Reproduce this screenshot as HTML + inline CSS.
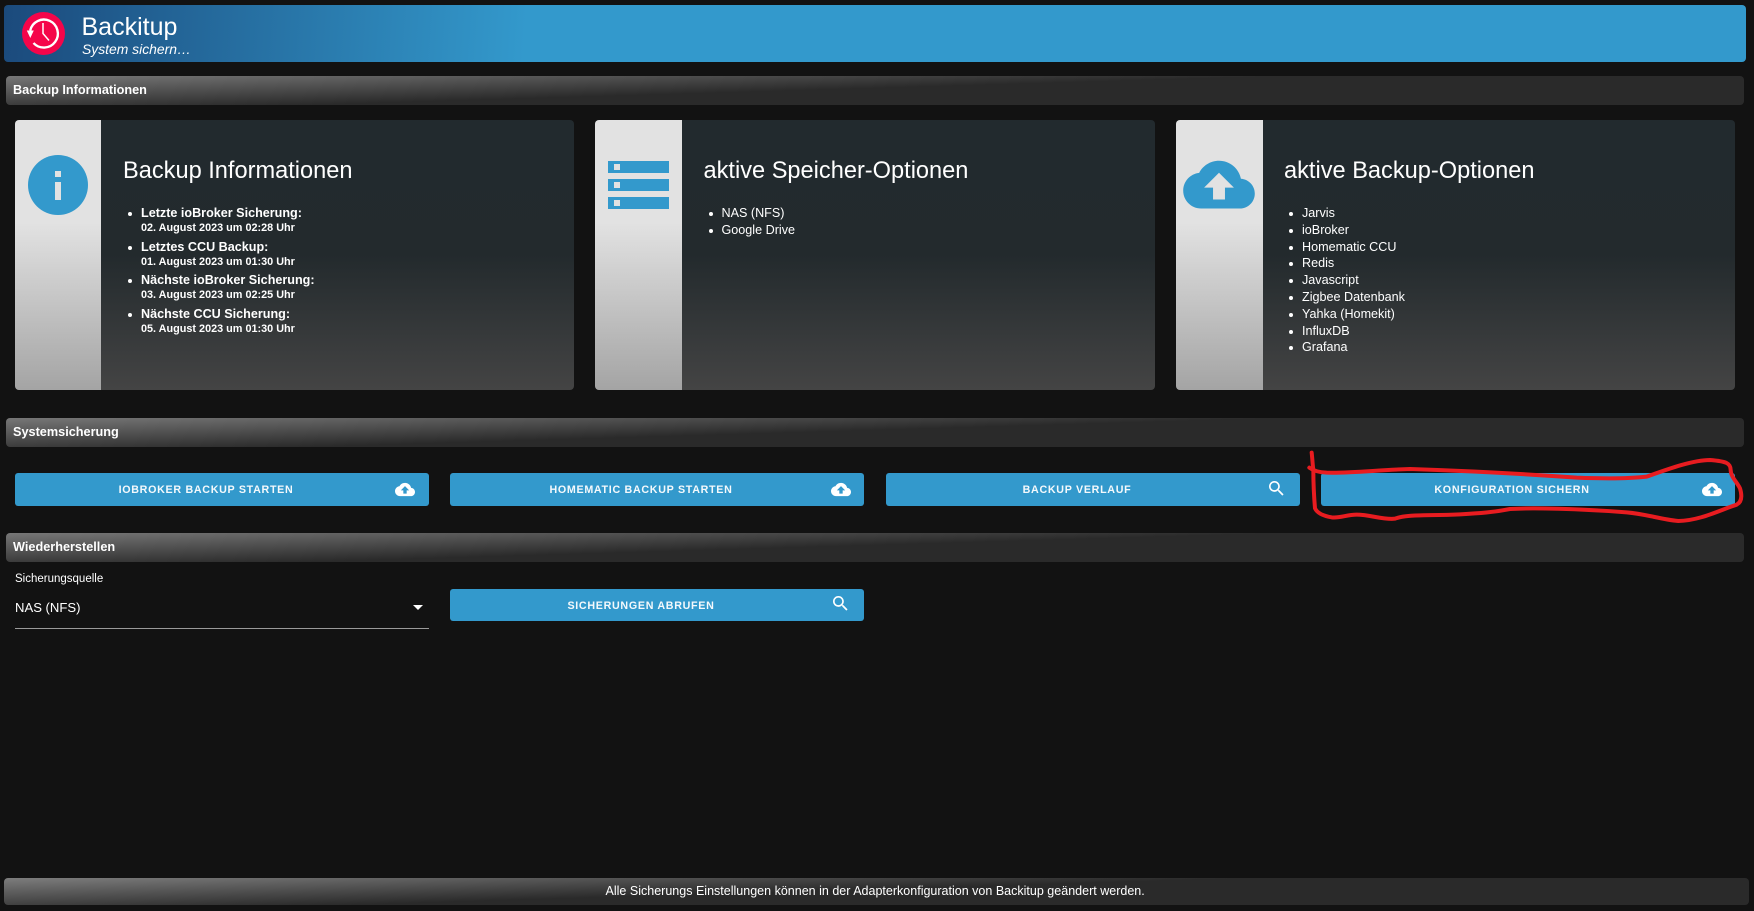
<!DOCTYPE html>
<html lang="de">
<head>
<meta charset="utf-8">
<title>Backitup</title>
<style>
html,body{margin:0;padding:0;background:#121212;width:1754px;height:911px;overflow:hidden}
body{position:relative;font-family:"Liberation Sans",sans-serif;color:#fff}
.a{position:absolute}
.t{position:absolute;white-space:nowrap}
.hdr{left:4px;top:5px;width:1742px;height:57px;border-radius:4px;background:linear-gradient(94deg,#1b4a7c 0,#3399cc 30%)}
.bar{position:absolute;left:6px;width:1738px;height:29px;border-radius:4px;background:linear-gradient(178.3deg,#777 0,#2a2a2a 47%)}
.bar b{position:absolute;left:7px;top:7px;font-size:12.7px;line-height:15px;white-space:nowrap}
.card{position:absolute;top:120px;height:270px;border-radius:4px;overflow:hidden;background:linear-gradient(180deg,#222a2e 0,#232a2d 50%,#444 100%)}
.strip{position:absolute;left:0;top:0;bottom:0;width:87px;background:linear-gradient(180deg,#e2e2e2 0,#e2e2e2 38%,#a4a4a4 100%)}
.card h2{position:absolute;margin:0;top:36px;font-weight:400;font-size:23.6px;line-height:30px;white-space:nowrap}
ul{position:absolute;margin:0;padding:0;list-style:none}
li{position:relative;white-space:nowrap}
li:before{content:"";position:absolute;left:-13px;width:4px;height:4px;border-radius:50%;background:#fff}
.l1 li{height:33.6px;font-size:12.6px;line-height:15px}
.l1 li:before{top:6px}
.l1 b{display:block}
.l1 small{display:block;font-weight:700;font-size:10.85px;line-height:15px}
.l2 li{height:16.8px;line-height:16.8px;font-size:12.6px}
.l2 li:before{top:7px}
.btn{position:absolute;width:414px;height:33px;top:473px;background:#3399cc;border-radius:3px}
.btn span{position:absolute;left:0;width:382px;text-align:center;top:1px;line-height:33px;font-size:10.7px;font-weight:700;letter-spacing:.7px;white-space:nowrap;color:#f4f9fc}
.btn svg{position:absolute}
</style>
</head>
<body>
<div class="a hdr"></div>
<svg class="a" style="left:22px;top:12px" width="43" height="43" viewBox="0 0 43 43">
<circle cx="21.500" cy="21.500" r="21.500" fill="#f5054a"/>
<path d="M8.200 18.500A14 14 0 1 1 11.500 31" fill="none" stroke="#fff" stroke-width="2.400"/>
<path d="M4.800 18.500h7l-3.500 7.500z" fill="#fff"/>
<path d="M21 11v10.500l6 7" fill="none" stroke="#fff" stroke-width="1.500"/>
</svg>
<div class="t" style="left:81.500px;top:12px;font-size:25px;line-height:30px">Backitup</div>
<div class="t" style="left:82px;top:41.400px;font-size:13.900px;line-height:16px;font-style:italic">System sichern…</div>

<div class="bar" style="top:76px"><b>Backup Informationen</b></div>

<div class="card" style="left:15px;width:559px">
<div class="strip" style="width:86px"></div>
<svg class="a" style="left:13px;top:35px" width="60" height="60" viewBox="0 0 60 60"><circle cx="30" cy="30" r="30" fill="#3399cc"/><rect x="27" y="16" width="6" height="6" fill="#e2e2e2"/><rect x="27" y="27" width="6" height="18" fill="#e2e2e2"/></svg>
<h2 style="left:108px">Backup Informationen</h2>
<ul class="l1" style="left:126px;top:86px">
<li><b>Letzte ioBroker Sicherung:</b><small>02. August 2023 um 02:28 Uhr</small></li>
<li><b>Letztes CCU Backup:</b><small>01. August 2023 um 01:30 Uhr</small></li>
<li><b>Nächste ioBroker Sicherung:</b><small>03. August 2023 um 02:25 Uhr</small></li>
<li><b>Nächste CCU Sicherung:</b><small>05. August 2023 um 01:30 Uhr</small></li>
</ul>
</div>

<div class="card" style="left:595px;width:560px">
<div class="strip"></div>
<svg class="a" style="left:13px;top:41px" width="61" height="48" viewBox="0 0 61 48"><g fill="#3399cc"><rect width="61" height="12"/><rect y="18" width="61" height="12"/><rect y="36" width="61" height="12"/></g><g fill="#e2e2e2"><rect x="6" y="3" width="6" height="6"/><rect x="6" y="21" width="6" height="6"/><rect x="6" y="39" width="6" height="6"/></g></svg>
<h2 style="left:108.500px">aktive Speicher-Optionen</h2>
<ul class="l2" style="left:126.500px;top:85px">
<li>NAS (NFS)</li>
<li>Google Drive</li>
</ul>
</div>

<div class="card" style="left:1176px;width:559px">
<div class="strip"></div>
<svg class="a" style="left:6.500px;top:38.500px" width="72" height="51" viewBox="0 3.400 24 17.100"><path fill="#3399cc" fill-rule="evenodd" d="M19.350 10.040C18.670 6.590 15.640 4 12 4 9.110 4 6.600 5.640 5.350 8.040 2.340 8.360 0 10.910 0 14c0 3.310 2.690 6 6 6h13c2.760 0 5-2.240 5-5 0-2.640-2.050-4.780-4.650-4.960zM14 13v4h-4v-4H7l5-5 5 5h-3z"/></svg>
<h2 style="left:108px">aktive Backup-Optionen</h2>
<ul class="l2" style="left:126px;top:85px">
<li>Jarvis</li>
<li>ioBroker</li>
<li>Homematic CCU</li>
<li>Redis</li>
<li>Javascript</li>
<li>Zigbee Datenbank</li>
<li>Yahka (Homekit)</li>
<li>InfluxDB</li>
<li>Grafana</li>
</ul>
</div>

<div class="bar" style="top:418px"><b>Systemsicherung</b></div>

<div class="btn" style="left:15px"><span>IOBROKER BACKUP STARTEN</span><svg style="left:380px;top:8.500px" width="20" height="15" viewBox="0 3.500 24 17"><path fill="#fff" fill-rule="evenodd" d="M19.350 10.040C18.670 6.590 15.640 4 12 4 9.110 4 6.600 5.640 5.350 8.040 2.340 8.360 0 10.910 0 14c0 3.310 2.690 6 6 6h13c2.760 0 5-2.240 5-5 0-2.640-2.050-4.780-4.650-4.960zM14 13v4h-4v-4H7l5-5 5 5h-3z"/></svg></div>
<div class="btn" style="left:450px"><span>HOMEMATIC BACKUP STARTEN</span><svg style="left:381px;top:8.500px" width="20" height="15" viewBox="0 3.500 24 17"><path fill="#fff" fill-rule="evenodd" d="M19.350 10.040C18.670 6.590 15.640 4 12 4 9.110 4 6.600 5.640 5.350 8.040 2.340 8.360 0 10.910 0 14c0 3.310 2.690 6 6 6h13c2.760 0 5-2.240 5-5 0-2.640-2.050-4.780-4.650-4.960zM14 13v4h-4v-4H7l5-5 5 5h-3z"/></svg></div>
<div class="btn" style="left:886px"><span>BACKUP VERLAUF</span><svg style="left:383px;top:8px" width="15" height="15" viewBox="3 3 18 18"><path fill="#fff" d="M15.500 14h-.790l-.280-.270C15.410 12.590 16 11.110 16 9.500 16 5.910 13.090 3 9.500 3S3 5.910 3 9.500 5.910 16 9.500 16c1.610 0 3.090-.590 4.230-1.570l.270.280v.790l5 4.990L20.490 19l-4.990-5zm-6 0C7.010 14 5 11.990 5 9.500S7.010 5 9.500 5 14 7.010 14 9.500 11.990 14 9.500 14z"/></svg></div>
<div class="btn" style="left:1321px"><span>KONFIGURATION SICHERN</span><svg style="left:381px;top:8.500px" width="20" height="15" viewBox="0 3.500 24 17"><path fill="#fff" fill-rule="evenodd" d="M19.350 10.040C18.670 6.590 15.640 4 12 4 9.110 4 6.600 5.640 5.350 8.040 2.340 8.360 0 10.910 0 14c0 3.310 2.690 6 6 6h13c2.760 0 5-2.240 5-5 0-2.640-2.050-4.780-4.650-4.960zM14 13v4h-4v-4H7l5-5 5 5h-3z"/></svg></div>

<div class="bar" style="top:533px"><b>Wiederherstellen</b></div>

<div class="t" style="left:15px;top:572px;font-size:11.500px;line-height:14px">Sicherungsquelle</div>
<div class="t" style="left:15px;top:599px;font-size:13.100px;line-height:17px">NAS (NFS)</div>
<div class="a" style="left:413px;top:605px;width:0;height:0;border-left:5px solid transparent;border-right:5px solid transparent;border-top:5px solid #fff"></div>
<div class="a" style="left:15px;top:628px;width:414px;height:1px;background:#9a9a9a"></div>

<div class="btn" style="left:450px;top:589px;height:32px"><span style="line-height:32px">SICHERUNGEN ABRUFEN</span><svg style="left:383px;top:7px" width="15" height="15" viewBox="3 3 18 18"><path fill="#fff" d="M15.500 14h-.790l-.280-.270C15.410 12.590 16 11.110 16 9.500 16 5.910 13.090 3 9.500 3S3 5.910 3 9.500 5.910 16 9.500 16c1.610 0 3.090-.590 4.230-1.570l.270.280v.790l5 4.990L20.490 19l-4.990-5zm-6 0C7.010 14 5 11.990 5 9.500S7.010 5 9.500 5 14 7.010 14 9.500 11.990 14 9.500 14z"/></svg></div>

<div class="a" style="left:4px;top:878px;width:1745px;height:27px;border-radius:4px;background:linear-gradient(178.300deg,#7d7d7d 0,#2a2a2a 47%)"></div>
<div class="t" style="left:605.500px;top:884px;font-size:12.520px;line-height:14px">Alle Sicherungs Einstellungen können in der Adapterkonfiguration von Backitup geändert werden.</div>

<svg class="a" style="left:1260px;top:430px" width="494" height="110" viewBox="0 0 1482 330">
<path fill="none" stroke="#e81c20" stroke-width="12" stroke-linecap="round" stroke-linejoin="round" d="M155 68C157 85 158 105 160 120C160 160 162 200 165 235C172 250 190 258 215 262C240 265 260 254 290 254C330 254 370 270 405 266C440 252 500 258 600 253C660 250 700 247 750 237C820 233 950 236 1100 247C1160 252 1200 268 1255 273C1320 272 1380 240 1430 224C1447 215 1446 195 1440 175C1430 155 1412 140 1412 120C1412 100 1400 94 1350 90C1300 90 1230 115 1160 140C1100 147 1000 145 950 143C800 132 600 122 450 117C350 120 280 130 200 128C180 127 160 122 148 113"/>
</svg>
</body>
</html>
